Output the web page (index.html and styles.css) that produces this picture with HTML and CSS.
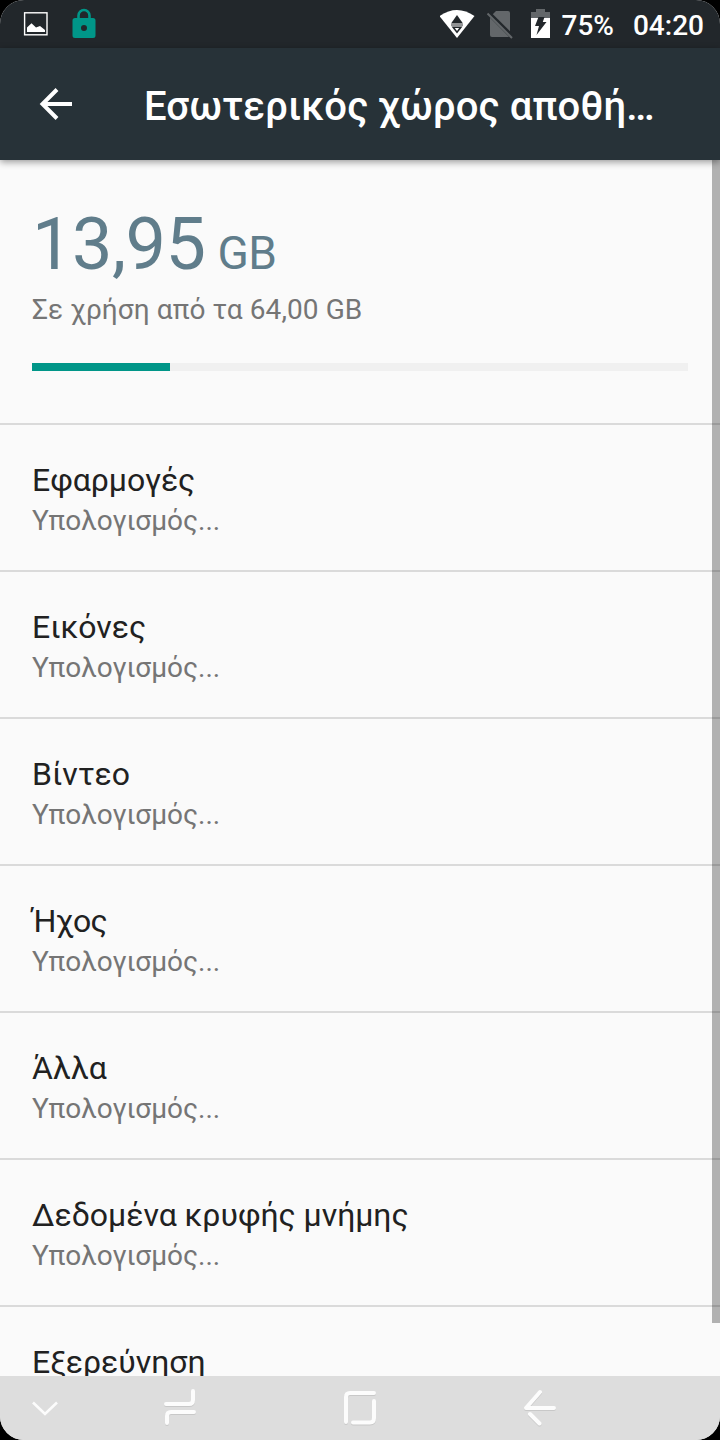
FILE: index.html
```html
<!DOCTYPE html>
<html lang="el">
<head>
<meta charset="utf-8">
<title>Εσωτερικός χώρος αποθήκευσης</title>
<link rel="stylesheet" href="styles.css">
</head>
<body>
<div class="screen">
  <header class="status">
    <svg class="status-left" width="120" height="48" viewBox="0 0 120 48">
      <rect x="24.600" y="12.800" width="22.400" height="22" fill="none" stroke="#fff" stroke-width="1.400"/>
      <path d="M27 32V27.500L31.500 23.300L36 27.500L40 26L45 30V32Z" fill="#fff"/>
      <path d="M78.500 19V15.500a5.500 5.500 0 0 1 11 0V19" fill="none" stroke="#009688" stroke-width="2.600"/>
      <path fill-rule="evenodd" d="M75 18H93a2.500 2.500 0 0 1 2.500 2.500V35.500a2.500 2.500 0 0 1-2.500 2.500H75a2.500 2.500 0 0 1-2.500-2.500V20.500a2.500 2.500 0 0 1 2.500-2.500ZM84 25a3 3 0 1 0 0 6a3 3 0 1 0 0-6Z" fill="#009688"/>
    </svg>
    <div class="status-right">
      <svg width="112" height="48" viewBox="440 0 112 48">
        <path d="M439.500 16Q457 4 474.500 16L457 38Z" fill="#fff"/>
        <path d="M457 15L463 23.500H451Z" fill="#22272b"/>
        <path d="M451 25H463" stroke="#22272b" stroke-width="1"/>
        <path d="M451.500 26.500H462.500L457 33.500Z" fill="#22272b"/>
        <path d="M454.800 28H459.200L457 31Z" fill="#fff"/>
        <path d="M496 11H508a2 2 0 0 1 2 2V35a2 2 0 0 1-2 2H492a2 2 0 0 1-2-2V17Z" fill="#63676a"/>
        <path d="M488 12.500L513 37.500" stroke="#22272b" stroke-width="4.500"/>
        <path d="M487.500 13.500L512 38" stroke="#63676a" stroke-width="2"/>
        <path d="M531 12H536V9H545V12H550V18H531Z" fill="#63676a"/>
        <path d="M531 18H550V38H531Z" fill="#fff"/>
        <path d="M538.500 17H544.500L542.800 22H546.500L536.500 35L539 26H535Z" fill="#22272b"/>
      </svg>
      <span class="battery">75%</span>
      <span class="clock">04:20</span>
    </div>
  </header>
  <div class="appbar">
    <svg class="back" width="34" height="34" viewBox="0 0 34 34" fill="none" stroke="#fff" stroke-width="4">
      <path d="M33 17H4M18 2.500L3.500 17L18 31.500"/>
    </svg>
    <h1 class="title">Εσωτερικός χώρος αποθή…</h1>
  </div>
  <main class="content">
    <section class="summary">
      <div class="used"><span class="amount">13,95</span><span class="unit">GB</span></div>
      <div class="total">Σε χρήση από τα 64,00 GB</div>
      <div class="track"><div class="fill"></div></div>
    </section>
    <section class="item"><div class="name">Εφαρμογές</div><div class="state">Υπολογισμός...</div></section>
    <section class="item"><div class="name">Εικόνες</div><div class="state">Υπολογισμός...</div></section>
    <section class="item"><div class="name">Βίντεο</div><div class="state">Υπολογισμός...</div></section>
    <section class="item"><div class="name name-tight">Ήχος</div><div class="state">Υπολογισμός...</div></section>
    <section class="item"><div class="name">Άλλα</div><div class="state">Υπολογισμός...</div></section>
    <section class="item"><div class="name">Δεδομένα κρυφής μνήμης</div><div class="state">Υπολογισμός...</div></section>
    <section class="item"><div class="name">Εξερεύνηση</div></section>
    <div class="scrollbar"></div>
  </main>
  <nav class="navbar">
    <svg width="720" height="64" viewBox="0 1376 720 64" fill="none" stroke="#fcfcfc" stroke-linecap="round" stroke-linejoin="round">
      <path d="M33 1402.500L45 1414L57 1402.500" stroke-width="2.600" stroke-linecap="butt" stroke-linejoin="miter"/>
      <g class="nav-keys" stroke-width="4">
        <path d="M166 1404H189Q193 1404 193 1400V1391M194 1412H171Q167 1412 167 1416V1423"/>
        <path d="M346 1422V1397Q346 1393 350 1393H374M374 1401V1418Q374 1422.500 370 1422.500H353"/>
        <path d="M554 1408H526L540 1392M530 1414L539.500 1423.500"/>
      </g>
    </svg>
  </nav>
</div>
</body>
</html>
```
FILE: styles.css
```css
* { box-sizing: border-box; }
body {
  margin: 0;
  background: #000;
  font-family: Roboto, "Noto Sans", sans-serif;
}
.screen {
  display: flex;
  flex-direction: column;
  width: 720px;
  height: 1440px;
  overflow: hidden;
  border-radius: 24px;
  background: #fafafa;
}
.status {
  display: flex;
  flex: none;
  justify-content: space-between;
  height: 48px;
  background: #22272b;
  color: #fff;
}
.status-right {
  display: flex;
  padding-right: 16px;
  font-size: 28px;
  font-weight: 500;
  line-height: 51px;
}
.battery { margin-left: 10px; }
.clock { margin-left: 19px; }
.appbar {
  display: flex;
  flex: none;
  align-items: center;
  z-index: 1;
  height: 112px;
  padding-left: 39px;
  background: #273238;
  box-shadow: 0 2px 7px rgba(0, 0, 0, .4);
}
.title {
  margin: 6px 0 0 71px;
  color: #fff;
  font-size: 40px;
  font-weight: 500;
  letter-spacing: .1px;
  line-height: 48px;
  white-space: nowrap;
}
.content {
  position: relative;
  flex: 1;
  min-height: 0;
  overflow: hidden;
}
.summary {
  height: 263px;
  padding: 43px 32px 0;
}
.used {
  display: flex;
  align-items: baseline;
  gap: 12px;
  height: 88px;
  color: #607d8b;
}
.amount {
  font-size: 72px;
  letter-spacing: -.5px;
  line-height: 84px;
}
.unit {
  font-size: 46px;
  letter-spacing: -.5px;
}
.total {
  height: 33px;
  margin-top: 2px;
  color: #757575;
  font-size: 28px;
  letter-spacing: .08px;
  line-height: 33px;
}
.track {
  height: 8px;
  margin-top: 37px;
  background: #f0f0f0;
}
.fill {
  width: 138px;
  height: 8px;
  background: #009688;
}
.item {
  height: 147px;
  padding: 36px 32px 0;
  border-top: 2px solid #dadada;
}
.name {
  color: #212121;
  font-size: 32px;
  letter-spacing: -.04px;
  line-height: 38px;
}
.name-tight { letter-spacing: -.6px; }
.state {
  margin-top: 5px;
  color: #757575;
  font-size: 28px;
  line-height: 33px;
}
.scrollbar {
  position: absolute;
  top: 0;
  right: 0;
  width: 8px;
  height: 1163px;
  background: rgba(0, 0, 0, .29);
}
.navbar {
  flex: none;
  height: 64px;
  background: #ddd;
}
.navbar svg { display: block; }
.nav-keys { filter: drop-shadow(0 1px 0 #c8c8c8); }
```
